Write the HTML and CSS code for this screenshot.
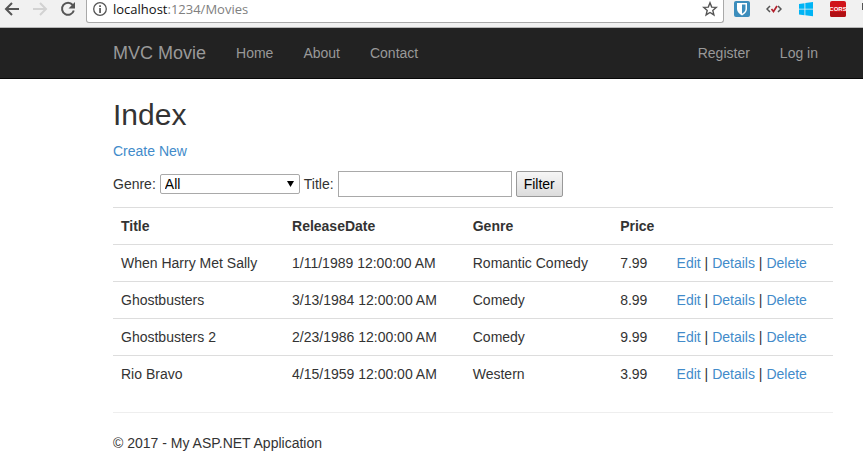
FILE: index.html
```html
<!DOCTYPE html>
<html lang="en">
<head>
<meta charset="utf-8">
<title>Index - My ASP.NET Application</title>
<link rel="stylesheet" href="styles.css">
</head>
<body>
<div class="toolbar">
  <div class="history">
    <button type="button" aria-label="Back"><svg width="16" height="16" viewBox="0 0 16 16"><path d="M15 8H2.500M8 2L2 8l6 6" fill="none" stroke="#555" stroke-width="2"/></svg></button>
    <button type="button" aria-label="Forward"><svg width="16" height="16" viewBox="0 0 16 16"><path d="M1 8h12.500M8 2l6 6-6 6" fill="none" stroke="#d2d2d2" stroke-width="2"/></svg></button>
    <button type="button" aria-label="Reload"><svg width="16" height="16" viewBox="0 0 16 16"><path d="M12.700 4A6 6 0 1 0 13.800 9.500" fill="none" stroke="#555" stroke-width="2"/><path d="M15 1v6.500H8.500z" fill="#555"/></svg></button>
  </div>
  <div class="address">
    <svg width="16" height="16" viewBox="0 0 16 16"><circle cx="8" cy="8" r="6.300" fill="none" stroke="#555" stroke-width="1.300"/><path d="M7.200 4.200h1.700v1.700H7.200zM7.200 7h1.700v5H7.200z" fill="#555"/></svg>
    <div class="url">localhost<span>:1234/Movies</span></div>
    <button type="button" aria-label="Bookmark"><svg width="16" height="16" viewBox="0 0 16 16"><path d="M8 1.800l1.700 4.300 4.600.3-3.500 3 1.100 4.500L8 11.500l-3.900 2.400 1.100-4.500-3.500-3 4.600-.3z" fill="none" stroke="#555" stroke-width="1.400"/></svg></button>
  </div>
  <div class="extensions">
    <svg width="16" height="16" viewBox="0 0 16 16"><rect width="16" height="16" rx="2" fill="#3c8dbc"/><path d="M3 2h10v6c0 3-2.500 5-5 6.500C5.500 13 3 11 3 8z" fill="#fff"/><path d="M8 3.500h3.500V8c0 2-1.700 3.600-3.500 4.800z" fill="#3c8dbc"/></svg>
    <svg width="16" height="16" viewBox="0 0 16 16"><path d="M4 5L1 8l3 3M12 5l3 3-3 3" fill="none" stroke="#555" stroke-width="1.500"/><path d="M5.500 8l2 2.500L11 5" fill="none" stroke="#b3202c" stroke-width="1.700"/></svg>
    <svg width="16" height="16" viewBox="0 0 16 16"><path d="M1 3l5.500-.8v5.500H1zM7.300 2L15 1v6.700H7.300zM1 8.500h5.500v5.700L1 13.500zM7.300 8.500H15v6.800l-7.700-1z" fill="#00b4f5"/></svg>
    <svg width="16" height="16" viewBox="0 0 16 16"><rect width="16" height="16" rx="2" fill="#d0141a"/><path d="M0 11h16v3a2 2 0 0 1-2 2H2a2 2 0 0 1-2-2z" fill="#b01015"/><text x="8" y="10" class="badge">CORS</text></svg>
    <svg width="16" height="16" viewBox="0 0 16 16"><path d="M0 2h12v7H0z" fill="#555"/></svg>
  </div>
</div>
<nav class="navbar">
  <a class="brand" href="#">MVC Movie</a>
  <a href="#">Home</a>
  <a href="#">About</a>
  <a href="#">Contact</a>
  <div class="account"><a href="#">Register</a><a href="#">Log in</a></div>
</nav>
<main class="container">
  <h2>Index</h2>
  <p><a href="#">Create New</a></p>
  <form class="filter">
    <label for="genre">Genre:</label>
    <span class="picker"><select id="genre"><option>All</option></select><svg width="7" height="6" viewBox="0 0 7 6"><path d="M0 0h7L3.500 6z"/></svg></span>
    <label for="title">Title:</label>
    <input id="title" type="text">
    <button type="submit">Filter</button>
  </form>
  <table>
    <thead><tr><th>Title</th><th>ReleaseDate</th><th>Genre</th><th>Price</th><th></th></tr></thead>
    <tbody>
      <tr><td>When Harry Met Sally</td><td>1/11/1989 12:00:00 AM</td><td>Romantic Comedy</td><td>7.99</td><td><a href="#">Edit</a> | <a href="#">Details</a> | <a href="#">Delete</a></td></tr>
      <tr><td>Ghostbusters</td><td>3/13/1984 12:00:00 AM</td><td>Comedy</td><td>8.99</td><td><a href="#">Edit</a> | <a href="#">Details</a> | <a href="#">Delete</a></td></tr>
      <tr><td>Ghostbusters 2</td><td>2/23/1986 12:00:00 AM</td><td>Comedy</td><td>9.99</td><td><a href="#">Edit</a> | <a href="#">Details</a> | <a href="#">Delete</a></td></tr>
      <tr><td>Rio Bravo</td><td>4/15/1959 12:00:00 AM</td><td>Western</td><td>3.99</td><td><a href="#">Edit</a> | <a href="#">Details</a> | <a href="#">Delete</a></td></tr>
    </tbody>
  </table>
  <hr>
  <footer>© 2017 - My ASP.NET Application</footer>
</main>
</body>
</html>
```
FILE: styles.css
```css
* { box-sizing: border-box; }
body {
  margin: 0;
  background: #fff;
  color: #333;
  font: 14px/20px "Liberation Sans", Arial, sans-serif;
}
a { color: #428bca; text-decoration: none; }
svg { display: block; flex: none; }

.toolbar {
  display: flex;
  align-items: flex-start;
  height: 28px;
  gap: 10px;
  padding-left: 4px;
  background: #f1f1f1;
  border-bottom: 1px solid #b6b6b6;
  overflow: hidden;
}
.toolbar button { padding: 0; border: 0; background: none; }
.history, .extensions { display: flex; padding-top: 1px; }
.history { gap: 12px; }
.extensions { gap: 16px; width: 129px; overflow: hidden; }
.address {
  display: flex;
  flex: 1;
  align-items: center;
  gap: 5px;
  height: 23px;
  padding: 0 5px 4px;
  background: #fff;
  border: 1px solid #a9a9a9;
  border-top: 0;
  border-radius: 0 0 3px 3px;
}
.url { flex: 1; color: #111; font: 13px/18px "Open Sans", "Segoe UI", sans-serif; }
.url span { color: #808080; }
.badge { font: bold 6px "Liberation Sans", sans-serif; fill: #fff; text-anchor: middle; }

.navbar {
  display: flex;
  align-items: center;
  gap: 30px;
  height: 51px;
  padding: 0 45px 0 113px;
  background: #222;
  border-bottom: 1px solid #080808;
}
.navbar a { color: #999; }
.navbar .brand { font-size: 18px; }
.account { display: flex; gap: 30px; margin-left: auto; }

.container { padding: 20px 30px 0 113px; }
h2 { margin: 0 0 10px; font-size: 30px; font-weight: 400; line-height: 32px; }
p { margin: 0 0 10px; }

.filter { display: flex; align-items: center; gap: 4px; margin-bottom: 10px; color: #333; }
.filter select, .filter input, .filter button { font: inherit; color: #000; border: 1px solid #a9a9a9; }
.picker { display: grid; align-items: center; width: 140px; }
.picker select {
  grid-area: 1 / 1;
  appearance: none;
  height: 20px;
  padding: 0 4px;
  background: #fff;
  border-radius: 2px;
  line-height: 18px;
}
.picker svg { grid-area: 1 / 1; justify-self: end; margin-right: 6px; pointer-events: none; }
.filter input { width: 174px; height: 26px; padding: 2px; background: #fff; }
.filter button {
  height: 26px;
  padding: 0 7px;
  background: linear-gradient(#f6f6f6, #dcdcdc);
  border-color: #999;
  border-radius: 2px;
}

table { width: 100%; border-collapse: collapse; }
th, td { padding: 8px; border-top: 1px solid #ddd; text-align: left; }
hr { margin: 20px 0; border: 0; border-top: 1px solid #eee; }
```
